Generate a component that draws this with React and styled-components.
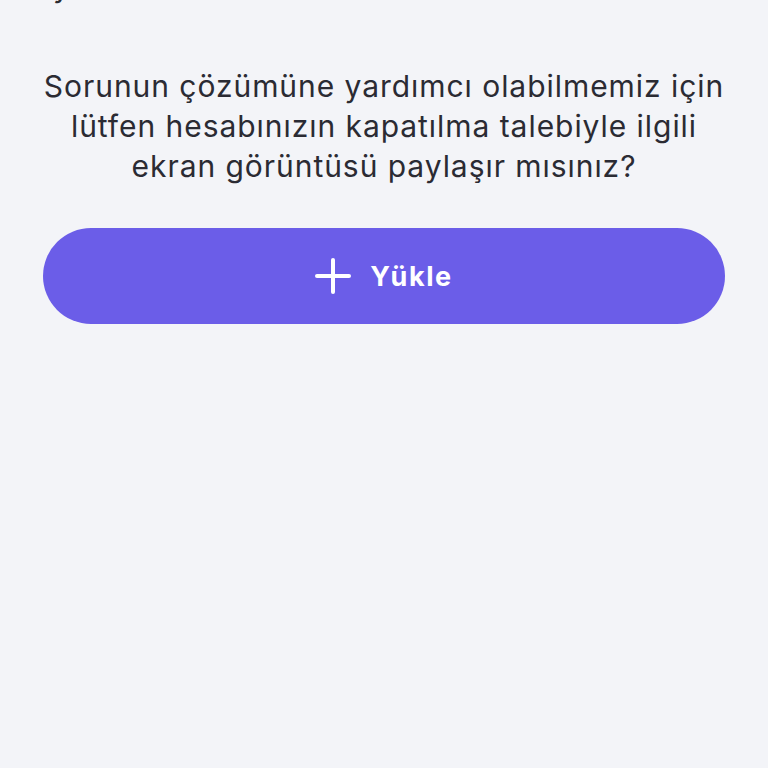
import React from "react"
import styled, { createGlobalStyle } from "styled-components"

const GlobalStyle = createGlobalStyle`
    html, body {
        margin: 0;
        padding: 0;
        background: #f3f4f8;
    }
    body {
        font-family: "Inter", "Liberation Sans", sans-serif;
    }
`

const Page = styled.div`
    width: 768px;
    height: 768px;
    overflow: hidden;
    background: #f3f4f8;
    display: flex;
    flex-direction: column;
    align-items: center;
`

const PrevLine = styled.div`
    margin-top: -34px;
    height: 40px;
    width: 682px;
    font-size: 30px;
    line-height: 40px;
    color: #2b2b33;
    text-align: left;
    padding-left: 10px;
    box-sizing: border-box;
`

const Question = styled.p`
    margin: 60px 0 0;
    width: 740px;
    font-size: 30px;
    line-height: 40px;
    font-weight: 400;
    color: #2b2b33;
    text-align: center;
    letter-spacing: 0.95px;
`

const UploadButton = styled.button`
    margin-top: 42px;
    width: 682px;
    height: 96px;
    border: none;
    border-radius: 48px;
    background: #6b5de8;
    color: #ffffff;
    display: flex;
    align-items: center;
    justify-content: center;
    gap: 19px;
    font-family: "Inter", "Liberation Sans", sans-serif;
    font-size: 27px;
    font-weight: 700;
    letter-spacing: 1.6px;
    cursor: pointer;
    svg {
        width: 36px;
        height: 36px;
    }
`

const PlusIcon = () => (
    <svg viewBox="0 0 36 36" fill="none" stroke="#ffffff" strokeWidth="4" strokeLinecap="round">
        <line x1="18" y1="2" x2="18" y2="34" />
        <line x1="2" y1="18" x2="34" y2="18" />
    </svg>
)

const App = () => (
    <>
    <GlobalStyle />
    <Page>
        <PrevLine>y</PrevLine>
        <Question>
            Sorunun çözümüne yardımcı olabilmemiz için<br />
            lütfen hesabınızın kapatılma talebiyle ilgili<br />
            ekran görüntüsü paylaşır mısınız?
        </Question>
        <UploadButton>
            <PlusIcon />
            Yükle
        </UploadButton>
    </Page>
    </>
)

export default App
